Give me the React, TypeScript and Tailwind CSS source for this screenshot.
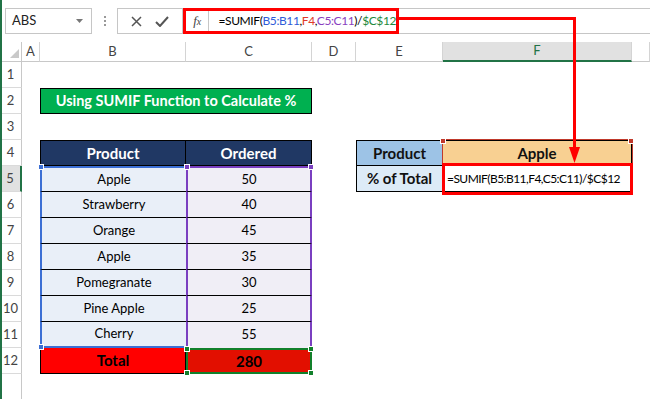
import React from 'react';

const colLabels = ['A', 'B', 'C', 'D', 'E', 'F', ''];
const products = [
  ['Apple', '50'],
  ['Strawberry', '40'],
  ['Orange', '45'],
  ['Apple', '35'],
  ['Pomegranate', '30'],
  ['Pine Apple', '25'],
  ['Cherry', '55'],
];

// small square grip on a range corner
const Grip = ({ pos, color }: { pos: string; color: string }) => (
  <span className={`absolute w-[6px] h-[6px] border border-white ${pos}`} style={{ backgroundColor: color }} />
);

const RowHead = ({ n }: { n: number }) => (
  <div
    className={`flex items-center justify-center text-[13px] text-[#444] ${n < 13 ? 'border-b border-[#dadada]' : ''} ${
      n === 5 ? 'bg-[#e1e1e1] border-r-2 border-r-[#217346]' : 'bg-white border-r border-r-[#c8c8c8]'
    }`}
  >
    {n < 13 ? n : ''}
  </div>
);

const BLUE = '#3c6fd4';
const PURPLE = '#7a3fc0';
const GREEN = '#12802b';
const DARKRED = '#c0392b';

export default function App() {
  const cells: React.ReactNode[] = [];

  cells.push(
    <div key="corner" className="relative bg-white border-r border-b border-[#c8c8c8]">
      <svg className="absolute right-[2px] bottom-[3px]" width="9" height="9" viewBox="0 0 9 9">
        <path d="M9 0 L9 9 L0 9 Z" fill="#c9c9c9" />
      </svg>
    </div>
  );
  colLabels.forEach((c, i) =>
    cells.push(
      <div
        key={'h' + i}
        className={`flex items-center justify-center text-[13px] border-r border-[#d4d4d4] ${
          c === 'F' ? 'bg-[#e1e1e1] border-b-2 border-b-[#217346] text-[#217346]' : 'bg-white border-b border-b-[#c8c8c8] text-[#444]'
        }`}
      >
        {c}
      </div>
    )
  );

  const blank = (k: string) => <div key={k} className="bg-white" />;

  for (let r = 1; r <= 13; r++) {
    cells.push(<RowHead key={'r' + r} n={r} />);
    if (r === 2) {
      cells.push(blank('a2'));
      cells.push(
        <div
          key="title"
          className="col-span-2 flex items-center justify-center bg-[#00b050] border border-black text-white font-bold text-[14.5px]"
        >
          Using SUMIF Function to Calculate %
        </div>
      );
      for (let i = 0; i < 4; i++) cells.push(blank('t' + i));
    } else if (r === 4) {
      cells.push(blank('a4'));
      cells.push(
        <div key="b4" className="flex items-center justify-center bg-[#203864] border border-black text-white font-bold text-[15px]">
          Product
        </div>
      );
      cells.push(
        <div key="c4" className="flex items-center justify-center bg-[#203864] border border-l-0 border-black text-white font-bold text-[15px]">
          Ordered
        </div>
      );
      cells.push(blank('d4'));
      cells.push(
        <div key="e4" className="flex items-center justify-center bg-[#9dc3e6] border border-black text-[#111] font-bold text-[15px]">
          Product
        </div>
      );
      cells.push(
        <div
          key="f4"
          className="relative flex items-center justify-center bg-[#f8d092] border border-l-0 border-black border-b-0 outline outline-1 outline-[#c0392b] text-[#111] font-bold text-[15px]"
        >
          Apple
          <Grip pos="-left-[3px] -top-[3px]" color={DARKRED} />
          <Grip pos="-right-[3px] -top-[3px]" color={DARKRED} />
        </div>
      );
      cells.push(blank('g4'));
    } else if (r >= 5 && r <= 11) {
      const [p, q] = products[r - 5];
      const first = r === 5;
      const last = r === 11;
      cells.push(blank('a' + r));
      cells.push(
        <div
          key={'b' + r}
          className={`relative flex items-center justify-center bg-[#e9eff8] border-l-2 border-l-[#3c6fd4] text-[13px] text-black ${
            first ? 'border-t-2 border-t-[#3c6fd4]' : ''
          } ${last ? 'border-b-2 border-b-[#3c6fd4]' : 'border-b border-b-black'}`}
        >
          {p}
          {first && <Grip pos="-left-[4px] -top-[4px]" color={BLUE} />}
          {last && <Grip pos="-left-[4px] -bottom-[4px]" color={BLUE} />}
        </div>
      );
      cells.push(
        <div
          key={'c' + r}
          className={`relative flex items-center justify-center bg-[#f0eef6] border-x-2 border-x-[#7a3fc0] text-[13px] text-black ${
            first ? 'border-t-2 border-t-[#7a3fc0]' : ''
          } ${last ? '' : 'border-b border-b-black'}`}
        >
          {q}
          {first && <Grip pos="-left-[4px] -top-[4px]" color={PURPLE} />}
          {first && <Grip pos="-right-[4px] -top-[4px]" color={PURPLE} />}
        </div>
      );
      cells.push(blank('d' + r));
      if (first) {
        cells.push(
          <div key="e5" className="flex items-center justify-center bg-[#ddebf7] border border-t-0 border-black text-[#111] font-bold text-[15px]">
            % of Total
          </div>
        );
        cells.push(
          <div
            key="f5"
            className="relative flex items-center pl-[4px] bg-white border-b border-r-2 border-b-black border-r-[#217346] text-[12px] tracking-[-0.55px] text-black whitespace-nowrap"
          >
            =SUMIF(B5:B11,F4,C5:C11)/$C$12
            <span className="absolute -left-[1px] -top-[3px] -right-[3px] -bottom-[4px] border-[3px] border-[#ff0000]" />
          </div>
        );
      } else {
        cells.push(blank('e' + r));
        cells.push(blank('f' + r));
      }
      cells.push(blank('g' + r));
    } else if (r === 12) {
      cells.push(blank('a12'));
      cells.push(
        <div key="b12" className="flex items-center justify-center bg-[#ff0000] border border-black border-t-0 text-black font-bold text-[15px]">
          Total
        </div>
      );
      cells.push(
        <div key="c12" className="relative flex items-center justify-center bg-[#e20f00] border-2 border-[#12802b] text-black font-bold text-[15px]">
          280
          <Grip pos="-left-[4px] -top-[4px]" color={GREEN} />
          <Grip pos="-right-[4px] -top-[4px]" color={GREEN} />
          <Grip pos="-left-[4px] -bottom-[4px]" color={GREEN} />
          <Grip pos="-right-[4px] -bottom-[4px]" color={GREEN} />
        </div>
      );
      for (let i = 0; i < 4; i++) cells.push(blank('x' + i));
    } else {
      for (let i = 0; i < 7; i++) cells.push(blank('e' + r + '_' + i));
    }
  }

  return (
    <div className="relative w-[650px] h-[399px] overflow-hidden bg-white border-l-2 border-[#217346] font-['Lato','Liberation_Sans',sans-serif]">
      {/* formula bar */}
      <div className="h-[42px] flex items-start pt-[8px] pl-[3px] bg-white">
        <div className="w-[87px] h-[26px] border border-[#c6c6c6] flex items-center justify-between pl-[6px] pr-[8px]">
          <span className="text-[13px] text-[#222]">ABS</span>
          <svg width="7" height="4" viewBox="0 0 7 4">
            <path d="M0 0 L7 0 L3.5 4 Z" fill="#777" />
          </svg>
        </div>
        <div className="w-[25px] h-[26px] flex flex-col items-center justify-center gap-[2px]">
          <span className="w-[2px] h-[2px] bg-[#999]" />
          <span className="w-[2px] h-[2px] bg-[#999]" />
          <span className="w-[2px] h-[2px] bg-[#999]" />
        </div>
        <div className="w-[66px] h-[26px] border border-[#c6c6c6] flex items-center justify-around px-[6px]">
          <svg width="11" height="11" viewBox="0 0 11 11">
            <path d="M1 1 L10 10 M10 1 L1 10" stroke="#555" strokeWidth="1.5" />
          </svg>
          <svg width="14" height="11" viewBox="0 0 14 11">
            <path d="M1 6 L5 10 L13 1" stroke="#555" strokeWidth="2" fill="none" />
          </svg>
        </div>
        <div className="flex-1 h-[26px] flex items-stretch">
          <div className="w-[216px] flex items-center border-[3px] border-[#ff0000]">
            <div className="w-[26px] h-full flex items-center justify-center border-r border-[#c6c6c6]">
              <span className="font-['Liberation_Serif',serif] italic text-[13px] text-[#444]">
                f<span className="text-[10px]">x</span>
              </span>
            </div>
            <div className="pl-[9px] text-[12px] tracking-[-0.4px] whitespace-nowrap text-black">
              =SUMIF(<span className="text-[#2f5bd8]">B5:B11</span>,<span className="text-[#e03a2a]">F4</span>,
              <span className="text-[#8a3fbf]">C5:C11</span>)/<span className="text-[#1e8a3c]">$C$12</span>
            </div>
          </div>
          <div className="flex-1 border-y border-[#c6c6c6]" />
        </div>
      </div>

      {/* sheet */}
      <div className="-ml-[2px] grid grid-cols-[22px_18px_146px_126px_44px_87px_189px_18px] grid-rows-[20px_repeat(13,26px)]">
        {cells}
      </div>

      {/* callout arrow */}
      <svg className="absolute left-[-2px] top-0" width="650" height="399">
        <path d="M398 18.5 L574.5 18.5 L574.5 150" stroke="#ff0000" strokeWidth="3" fill="none" />
        <path d="M569 147 L580 147 L574.5 163 Z" fill="#ff0000" />
      </svg>
    </div>
  );
}
